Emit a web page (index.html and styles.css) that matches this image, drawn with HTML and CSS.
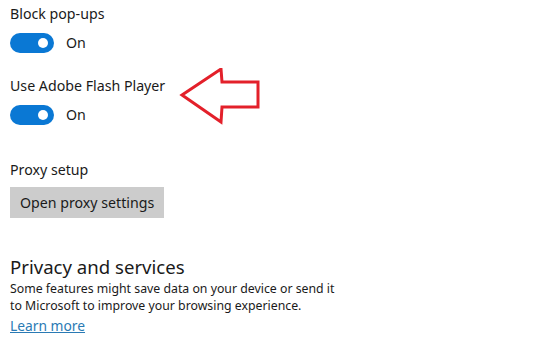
FILE: index.html
```html
<!DOCTYPE html>
<html lang="en">
  <head>
    <meta charset="utf-8" />
    <meta name="viewport" content="width=device-width, initial-scale=1" />
    <link rel="stylesheet" href="styles.css">
    <title>Advanced settings</title>
  </head>
  <body>
    <main class="settings">
      <section class="setting">
        <div class="setting-label">Block pop-ups</div>
        <div class="toggle-row">
          <span class="toggle is-on"><span class="toggle-knob"></span></span>
          <span class="toggle-text">On</span>
        </div>
      </section>

      <section class="setting setting--flash">
        <div class="setting-label">Use Adobe Flash Player</div>
        <div class="toggle-row">
          <span class="toggle is-on"><span class="toggle-knob"></span></span>
          <span class="toggle-text">On</span>
        </div>
        <!-- hand-drawn red arrow pointing at the flash setting -->
        <svg class="callout-arrow" width="84" height="60" viewBox="0 0 84 60">
          <polygon
            points="3,27 42,1 43,14 79,14 79,39 43,39 42,54"
            fill="none"
            stroke="#e3202a"
            stroke-width="3"
            stroke-linejoin="miter"
          />
        </svg>
      </section>

      <section class="setting setting--proxy">
        <div class="setting-label">Proxy setup</div>
        <button class="plain-button" type="button">Open proxy settings</button>
      </section>

      <section class="setting setting--privacy">
        <h2 class="section-title">Privacy and services</h2>
        <p class="section-text">
          Some features might save data on your device or send it<br />
          to Microsoft to improve your browsing experience.
        </p>
        <a class="learn-link" href="#">Learn more</a>
      </section>
    </main>
  </body>
</html>
```
FILE: styles.css
```css
:root {
  --accent: #0a78d4;
  --text: #1a1a1a;
  --button-bg: #cccccc;
  --link: #2a7ab4;
}

* {
  box-sizing: border-box;
}

html {
  font-family: "Segoe UI", "Noto Sans", "Open Sans", sans-serif;
  font-size: 14.2px;
  color: var(--text);
}

body {
  margin: 0;
  background: #ffffff;
}

.settings {
  padding: 4px 10px 0;
}

.setting {
  position: relative;

  & + & {
    margin-top: 23px;
  }
}

.setting-label {
  line-height: 20px;
}

.toggle-row {
  display: flex;
  align-items: center;
  gap: 12px;
  margin-top: 9px;
  height: 20px;
}

.toggle {
  display: inline-flex;
  align-items: center;
  justify-content: flex-end;
  width: 44px;
  height: 20px;
  border-radius: 10px;
  padding: 0 6px;
  background: #cccccc;

  &.is-on {
    background: var(--accent);
  }
}

.toggle-knob {
  width: 10px;
  height: 10px;
  border-radius: 50%;
  background: #ffffff;
}

.toggle-text {
  line-height: 20px;
}

/* The arrow sits over the empty space to the right of the label */
.callout-arrow {
  position: absolute;
  left: 169px;
  top: -8px;
}

.setting--proxy {
  margin-top: 35px !important;
}

.plain-button {
  display: block;
  margin-top: 7px;
  height: 31px;
  padding: 0 10px;
  border: 0;
  background: var(--button-bg);
  font: inherit;
  color: var(--text);
  line-height: 31px;
}

.setting--privacy {
  margin-top: 36px !important;
}

.section-title {
  margin: 0;
  font-size: 18.6px;
  font-weight: 400;
  line-height: 26px;
}

.section-text {
  margin: 0;
  font-size: 12.3px;
  line-height: 17px;
}

.learn-link {
  display: inline-block;
  margin-top: 2px;
  font-size: 13.8px;
  line-height: 20px;
  color: var(--link);
}
```
